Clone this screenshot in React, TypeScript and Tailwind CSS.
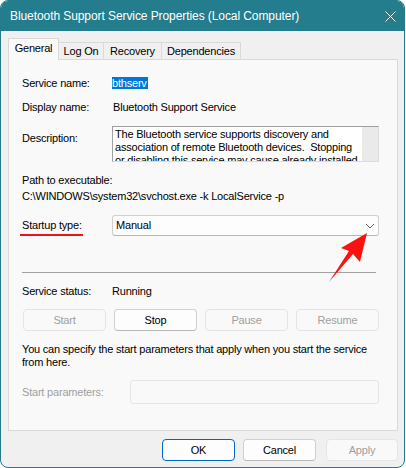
import React from 'react';

const font = "font-['Segoe_UI','Liberation_Sans',Arial,sans-serif] text-[11px] tracking-[-0.2px]";

function Btn({ label, disabled, primary, className = '' }: { label: string; disabled?: boolean; primary?: boolean; className?: string }) {
  return (
    <div
      className={`h-[22px] flex items-center justify-center rounded-[4px] border ${
        disabled
          ? 'border-[#e5e5e5] bg-[#f9f9f9] text-[#a0a0a0]'
          : primary
          ? 'border-[#0067c0] bg-[#fdfdfd] text-black'
          : 'border-[#d0d0d0] border-b-[#b8b8b8] bg-[#fdfdfd] text-black'
      } ${className}`}
    >
      {label}
    </div>
  );
}

export default function App() {
  const tabs = [
    { name: 'Log On', w: 'w-[45px]' },
    { name: 'Recovery', w: 'w-[58px]' },
    { name: 'Dependencies', w: 'w-[79px]' },
  ];

  return (
    <div className={`relative w-[406px] h-[468px] bg-white ${font}`}>
      {/* WINDOW */}
      <div className="w-[405px] h-[468px] border border-[#237d8c] rounded-[8px] overflow-hidden flex flex-col bg-[#f0f0f0]">
        {/* TITLE BAR */}
        <div className="h-[30px] bg-[#237d8c] flex items-center justify-between pl-[9px] pr-[8px] text-white text-[12px] tracking-[-0.08px]">
          <span>Bluetooth Support Service Properties (Local Computer)</span>
          <svg width="11" height="11" viewBox="0 0 11 11" className="mt-[1px]">
            <path d="M0.5 0.5 L10.5 10.5 M10.5 0.5 L0.5 10.5" stroke="white" strokeWidth="1" />
          </svg>
        </div>

        <div className="pl-[7px] pr-[6px] pt-[7px]">
          {/* TABS */}
          <div className="flex items-end h-[21px]">
            <div className="relative z-10 w-[51px] h-[22px] -mb-px bg-[#f9f9f9] border border-b-0 border-[#d9d9d9] flex items-center justify-center pb-[2px]">
              General
            </div>
            {tabs.map((t) => (
              <div key={t.name} className={`${t.w} h-[17px] bg-[#f0f0f0] border border-l-0 border-b-0 border-[#d9d9d9] flex items-center justify-center pt-[1px]`}>
                {t.name}
              </div>
            ))}
          </div>

          {/* PANEL */}
          <div className="h-[372px] bg-[#f9f9f9] border border-[#d9d9d9] pl-[13px] pr-[18px] pt-[14px] text-black">
            <div className="h-[18px] flex items-center">
              <span className="w-[90px]">Service name:</span>
              <span className="bg-[#0078d7] text-white leading-[12px] pr-[1px]">bthserv</span>
            </div>
            <div className="mt-[6px] h-[18px] flex items-center">
              <span className="w-[90px]">Display name:</span>
              <span className="pl-[1px]">Bluetooth Support Service</span>
            </div>
            <div className="mt-[10px] flex">
              <span className="w-[90px] pt-[5px] leading-[15px]">Description:</span>
              <div className="flex-1 h-[36px] border border-[#a0a0a0] border-r-[#dcdcdc] border-b-[#dcdcdc] bg-white flex overflow-hidden">
                <div className="flex-1 pl-[2px] pt-[1px] leading-[13px] whitespace-nowrap">
                  <div>The Bluetooth service supports discovery and</div>
                  <div>association of remote Bluetooth devices.&nbsp; Stopping</div>
                  <div>or disabling this service may cause already installed</div>
                </div>
                <div className="w-[16px] bg-[#eaeaea]" />
              </div>
            </div>
            <div className="mt-[11px] leading-[15px]">Path to executable:</div>
            <div className="leading-[16px]">{'C:\\WINDOWS\\system32\\svchost.exe -k LocalService -p'}</div>

            <div className="mt-[11px] flex items-center">
              <span className="w-[90px]">
                <span className="-ml-[2px] pl-[2px] pr-[1px] pb-[3px] border-b-2 border-[#e8141b]">Startup type:</span>
              </span>
              <div className="flex-1 h-[21px] border border-[#d0d0d0] border-b-[#b8b8b8] rounded-[3px] bg-[#fdfdfd] flex items-center justify-between pl-[3px] pr-[3px]">
                <span>Manual</span>
                <svg width="10" height="6" viewBox="0 0 10 6">
                  <path d="M1 1 L5 5 L9 1" fill="none" stroke="#606060" strokeWidth="1" />
                </svg>
              </div>
            </div>

            <div className="mt-[36px] mr-[3px] h-px bg-[#a0a0a0]" />

            <div className="mt-[10px] h-[16px] flex items-center">
              <span className="w-[90px]">Service status:</span>
              <span>Running</span>
            </div>

            <div className="mt-[10px] ml-[1px] grid grid-cols-4 gap-[8px]">
              <Btn label="Start" disabled />
              <Btn label="Stop" />
              <Btn label="Pause" disabled />
              <Btn label="Resume" disabled />
            </div>

            <div className="mt-[12px] leading-[13px]">
              You can specify the start parameters that apply when you start the service
              <br />
              from here.
            </div>

            <div className="mt-[11px] flex items-center text-[#a0a0a0]">
              <span className="w-[108px]">Start parameters:</span>
              <div className="flex-1 h-[24px] border border-[#e5e5e5] rounded-[3px] bg-[#f9f9f9]" />
            </div>
          </div>

          {/* BOTTOM BUTTONS */}
          <div className="mt-[8px] flex justify-end gap-[8px]">
            <Btn label="OK" primary className="w-[73px]" />
            <Btn label="Cancel" className="w-[73px]" />
            <Btn label="Apply" disabled className="w-[72px] ml-[2px]" />
          </div>
        </div>
      </div>

      {/* RED ANNOTATION ARROW */}
      <svg className="absolute left-0 top-0 pointer-events-none" width="406" height="468" viewBox="0 0 406 468">
        <polygon points="367,233 360,262 353,254 329,282 349,251 341,248" fill="#ff1010" />
      </svg>
    </div>
  );
}
